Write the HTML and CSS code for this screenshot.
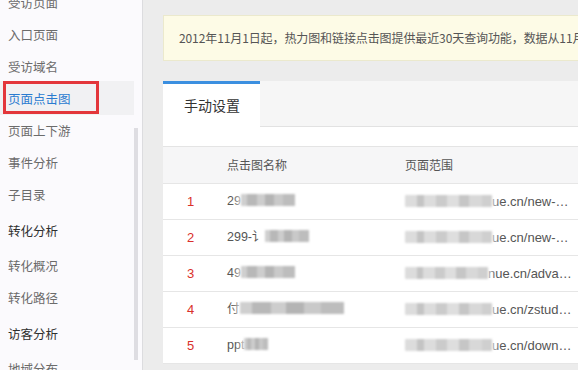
FILE: index.html
```html
<!DOCTYPE html>
<html lang="zh-CN">
<head>
<meta charset="utf-8">
<title>页面点击图</title>
<link rel="stylesheet" href="styles.css">
</head>
<body>
<div class="app">
  <aside class="sidebar">
    <ul class="menu">
      <li class="item">受访页面</li>
      <li class="item">入口页面</li>
      <li class="item">受访域名</li>
      <li class="item active"><span class="label">页面点击图</span><span class="mark"></span></li>
      <li class="item">页面上下游</li>
      <li class="item">事件分析</li>
      <li class="item">子目录</li>
      <li class="item head">转化分析</li>
      <li class="item after-head">转化概况</li>
      <li class="item">转化路径</li>
      <li class="item head">访客分析</li>
      <li class="item after-head">地域分布</li>
    </ul>
    <div class="scrollbar"></div>
  </aside>
  <main class="main">
    <div class="content">
      <div class="notice">2012年11月1日起，热力图和链接点击图提供最近30天查询功能，数据从11月1日开始计算。</div>
      <div class="panel">
        <div class="tabs">
          <div class="tab active">手动设置</div>
          <div class="tab-rest"></div>
        </div>
        <div class="spacer"></div>
        <div class="table">
          <div class="row header">
            <div class="c-no"></div>
            <div class="c-name">点击图名称</div>
            <div class="c-url">页面范围</div>
          </div>
          <div class="row">
            <div class="c-no">1</div>
            <div class="c-name">29<span class="blur w54"></span></div>
            <div class="c-url"><span class="blur w87"></span>ue.cn/new-…</div>
          </div>
          <div class="row">
            <div class="c-no">2</div>
            <div class="c-name">299-讠<span class="blur w44"></span></div>
            <div class="c-url"><span class="blur w87"></span>ue.cn/new-…</div>
          </div>
          <div class="row">
            <div class="c-no">3</div>
            <div class="c-name">49<span class="blur w54"></span></div>
            <div class="c-url"><span class="blur w83"></span>nue.cn/adva…</div>
          </div>
          <div class="row">
            <div class="c-no">4</div>
            <div class="c-name">付<span class="blur w104"></span></div>
            <div class="c-url"><span class="blur w87"></span>ue.cn/zstud…</div>
          </div>
          <div class="row">
            <div class="c-no">5</div>
            <div class="c-name">ppt<span class="blur w24"></span></div>
            <div class="c-url"><span class="blur w87"></span>ue.cn/down…</div>
          </div>
        </div>
      </div>
    </div>
  </main>
</div>
</body>
</html>
```

FILE: styles.css
```css
* { box-sizing: border-box; }
html, body {
  margin: 0;
  padding: 0;
  width: 578px;
  height: 370px;
  overflow: hidden;
}
body {
  font-family: "Noto Sans CJK SC", "Liberation Sans", sans-serif;
  font-size: 12px;
  color: #555;
}
.app {
  display: flex;
  height: 370px;
}
.sidebar {
  position: relative;
  width: 143px;
  flex: none;
  background: #fbfafd;
  border-right: 1px solid #dcdcdf;
  overflow: hidden;
}
.menu {
  list-style: none;
  margin: -13px 0 0 0;
  padding: 0;
}
.item {
  position: relative;
  height: 32px;
  line-height: 32px;
  padding-left: 8px;
  width: 134px;
  color: #6b6b6b;
  font-size: 12.5px;
  white-space: nowrap;
}
.item.head {
  margin-top: 4px;
  color: #2f2f2f;
}
.item.after-head { margin-top: 3px; }
.item.active {
  background: #f1f1f3;
  color: #2a7bd0;
  height: 34px;
  line-height: 32px;
  margin-top: -2px;
  padding-top: 2px;
}
.mark {
  position: absolute;
  left: 3px;
  top: 0;
  width: 96px;
  height: 33px;
  border: 3px solid #e3363b;
}
.scrollbar {
  position: absolute;
  left: 134px;
  top: 128px;
  width: 4px;
  height: 232px;
  background: #dedde2;
}
.main {
  flex: 1;
  background: #ececec;
  overflow: hidden;
  padding: 15px 0 0 20px;
}
.content {
  width: 640px;
}
.notice {
  height: 46px;
  line-height: 44px;
  padding-left: 15px;
  background: #fdfbe6;
  border: 1px solid #ebe9cd;
  color: #555;
  font-size: 12px;
  letter-spacing: -0.1px;
  white-space: nowrap;
  overflow: hidden;
}
.panel {
  margin-top: 20px;
  background: #fff;
}
.tabs {
  display: flex;
  height: 46px;
  background: #f6f6f6;
}
.tab {
  width: 97px;
  height: 46px;
  background: #fff;
  border-top: 3px solid #3b8fe0;
  padding-left: 21px;
  line-height: 42px;
  font-size: 14px;
  color: #333;
}
.tab-rest {
  flex: 1;
  border-bottom: 1px solid #e2e2e2;
}
.spacer {
  height: 20px;
  border-bottom: 1px solid #e4e4e4;
}
.row {
  display: flex;
  height: 36px;
  line-height: 35px;
  border-bottom: 1px solid #e6e6e6;
  color: #555;
  white-space: nowrap;
}
.row.header {
  height: 37px;
  background: #f6f6f7;
  color: #555;
}
.c-no {
  width: 64px;
  padding-left: 24px;
  color: #d9302b;
  font-family: "Liberation Sans", sans-serif;
  font-size: 13px;
}
.c-name {
  width: 178px;
  font-family: "Liberation Sans", "Noto Sans CJK SC", sans-serif;
  font-size: 12.5px;
}
.row.header .c-name, .row.header .c-url {
  font-family: "Noto Sans CJK SC", sans-serif;
  font-size: 12px;
}
.c-url {
  flex: 1;
  font-family: "Liberation Sans", sans-serif;
  font-size: 13px;
  color: #555;
}
.blur {
  display: inline-block;
  height: 12px;
  vertical-align: -1px;
  background:
    linear-gradient(90deg, #cfcfcf 0 12%, #b8b8b8 12% 30%, #cdcdcd 30% 44%, #b4b4b4 44% 62%, #c9c9c9 62% 78%, #bdbdbd 78% 100%);
  filter: blur(0.8px);
  box-shadow: 0 0 6px 4px rgba(255,255,255,0.7);
}
.c-url .blur {
  background:
    linear-gradient(90deg, #dcdcdc 0 14%, #c4c4c4 14% 22%, #dcdcdc 22% 36%, #cbcbcb 36% 48%, #dedede 48% 62%, #c6c6c6 62% 74%, #d8d8d8 74% 88%, #cfcfcf 88% 100%);
}
.w24 { width: 24px; }
.w44 { width: 44px; }
.w54 { width: 54px; }
.w83 { width: 83px; }
.w87 { width: 87px; }
.w104 { width: 104px; }
```
